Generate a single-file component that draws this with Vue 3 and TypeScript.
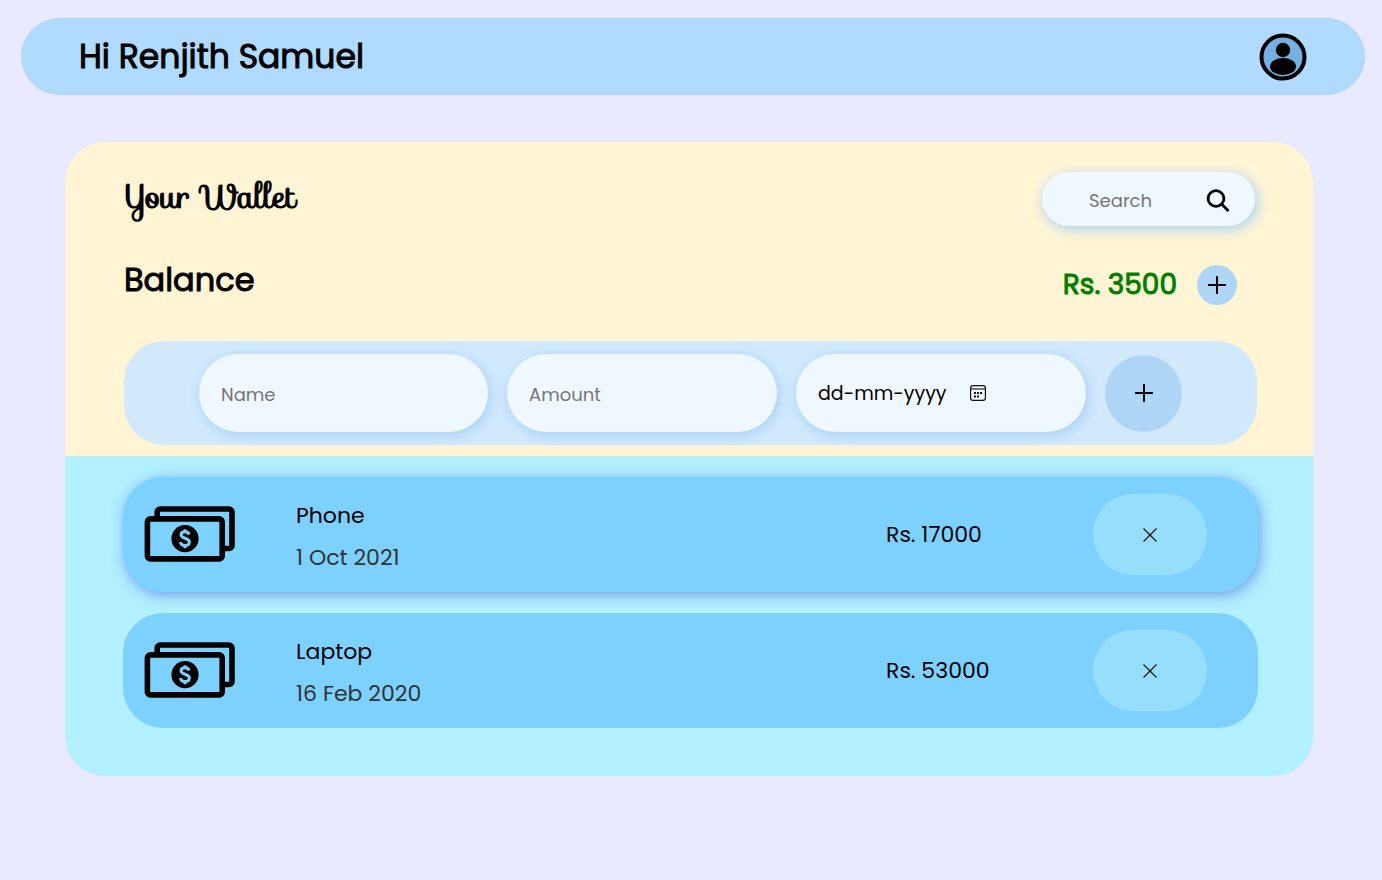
<script setup lang="ts">
import { computed, ref } from 'vue'

interface Expense {
  id: number
  name: string
  date: string
  amount: number
  raised: boolean
}

const user = 'Renjith Samuel'
const balance = ref(3500)
const query = ref('')
const name = ref('')
const amount = ref('')
const date = ref('')

const expenses = ref<Expense[]>([
  { id: 1, name: 'Phone', date: '1 Oct 2021', amount: 17000, raised: true },
  { id: 2, name: 'Laptop', date: '16 Feb 2020', amount: 53000, raised: false },
])

const visible = computed(() =>
  expenses.value.filter((e) => e.name.toLowerCase().includes(query.value.toLowerCase())),
)

function addExpense() {
  const value = Number(amount.value)
  if (!name.value || !value) return
  expenses.value.push({ id: Date.now(), name: name.value, date: date.value, amount: value, raised: false })
  name.value = ''
  amount.value = ''
  date.value = ''
}

function removeExpense(id: number) {
  expenses.value = expenses.value.filter((e) => e.id !== id)
}
</script>

<template>
  <div class="page">
    <header class="topbar">
      <h1 class="heading greeting">Hi {{ user }}</h1>
      <button class="avatar" type="button" aria-label="Profile">
        <svg viewBox="0 0 48 48" width="48" height="48" aria-hidden="true">
          <circle cx="24" cy="24" r="21.5" fill="#74b1e2" stroke="#000" stroke-width="4" />
          <circle cx="24" cy="17" r="7.2" />
          <ellipse cx="24" cy="33.5" rx="13" ry="8.5" />
        </svg>
      </button>
    </header>

    <main class="wallet">
      <section class="summary">
        <div class="row title-row">
          <h2 class="script">Your Wallet</h2>
          <form class="search" role="search" @submit.prevent>
            <input v-model="query" class="search-input" type="text" placeholder="Search" aria-label="Search" />
            <button class="plain" type="submit" aria-label="Run search">
              <svg viewBox="0 0 24 24" width="24" height="24" fill="none" stroke="#000" stroke-width="2.8" aria-hidden="true">
                <circle cx="10" cy="10.500" r="7.900" />
                <path d="M15.500 16 22.500 23" />
              </svg>
            </button>
          </form>
        </div>

        <div class="row balance-row">
          <h2 class="heading">Balance</h2>
          <div class="balance">
            <span class="balance-value">Rs. {{ balance }}</span>
            <button class="round small" type="button" aria-label="Add balance">
              <svg class="plus" viewBox="0 0 18 18" width="18" height="18" aria-hidden="true">
                <path d="M9 0v18M0 9h18" />
              </svg>
            </button>
          </div>
        </div>

        <form class="entry" @submit.prevent="addExpense">
          <input v-model="name" class="field" type="text" placeholder="Name" aria-label="Name" />
          <input v-model="amount" class="field" type="text" inputmode="numeric" placeholder="Amount" aria-label="Amount" />
          <div class="field date-field">
            <input v-model="date" class="date-input" type="text" placeholder="dd-mm-yyyy" aria-label="Date" />
            <button class="plain" type="button" aria-label="Choose date">
              <svg viewBox="0 0 16 16" width="16" height="16" aria-hidden="true">
                <rect x="0.6" y="0.6" width="14.8" height="14.8" rx="2.4" fill="none" stroke="#111" stroke-width="1.2" />
                <path d="M1 4h14" stroke="#111" stroke-width="1.1" />
                <path d="M4 7h2v2H4zM7 7h2v2H7zM10 7h2v2h-2zM4 10.5h2v2H4zM7 10.5h2v2H7z" fill="#111" />
              </svg>
            </button>
          </div>
          <button class="round large" type="submit" aria-label="Add expense">
            <svg class="plus" viewBox="0 0 18 18" width="18" height="18" aria-hidden="true">
              <path d="M9 0v18M0 9h18" />
            </svg>
          </button>
        </form>
      </section>

      <ul class="list">
        <li v-for="item in visible" :key="item.id" class="item" :class="{ raised: item.raised }">
          <svg viewBox="0 0 92 58" width="92" height="58" aria-hidden="true">
            <g fill="none" stroke="#000" stroke-width="5.6">
              <rect x="3.4" y="12.9" width="74.8" height="40" rx="3" />
              <path d="M13.2 12V6a3 3 0 0 1 3-3H85a3 3 0 0 1 3 3V39.5a3 3 0 0 1-3 3H79" />
            </g>
            <circle cx="41" cy="32.7" r="13.6" />
            <path
              d="M45 28.6c-.4-2-2-2.9-4-2.9-2.3 0-4 1.2-4 3.1 0 4.300 8.300 2.600 8.300 7.200 0 2.200-1.900 3.500-4.300 3.500-2.500 0-4.300-1.200-4.600-3.400M41 23.200v2.800M41 39.300v2.900"
              fill="none"
              stroke="#7dd1ff"
              stroke-width="3"
            />
          </svg>
          <div class="details">
            <span>{{ item.name }}</span>
            <span class="date">{{ item.date }}</span>
          </div>
          <span>Rs. {{ item.amount }}</span>
          <button class="remove" type="button" :aria-label="`Remove ${item.name}`" @click="removeExpense(item.id)">
            <svg viewBox="0 0 14 14" width="14" height="14" aria-hidden="true">
              <path d="M.5 .5l13 13M13.5 .5l-13 13" stroke="#111" stroke-width="1.2" />
            </svg>
          </button>
        </li>
      </ul>
    </main>
  </div>
</template>

<style>
body {
  margin: 0;
  background: #e9eaff;
}
</style>

<style scoped>
.page {
  padding: 18px 17px 48px 21px;
  font-family: Poppins, Inter, "Open Sans", sans-serif;
  font-size: 22px;
  color: #000;
}

.page *,
.page *::before {
  box-sizing: border-box;
}

button,
input {
  font-family: inherit;
  color: inherit;
  border: 0;
  padding: 0;
}

button {
  cursor: pointer;
}

input:focus {
  outline: none;
}

svg {
  display: block;
}

.plain,
.avatar {
  background: none;
}

.topbar {
  display: flex;
  align-items: center;
  justify-content: space-between;
  height: 77px;
  padding: 0 57px;
  background: #b0dbff;
  border: 1px solid #acd6f8;
  border-radius: 40px;
}

.heading {
  margin: 0;
  font-size: 32px;
  line-height: 40px;
  font-weight: 400;
  -webkit-text-stroke: 1px currentColor;
}

.greeting {
  font-size: 33px;
}

.wallet {
  margin: 47px 52px 0 44px;
  border-radius: 40px;
  overflow: hidden;
  background: #b2efff;
}

.summary {
  padding: 30px 56px 11px 59px;
  background: #fff5d5;
}

.row {
  display: flex;
  justify-content: space-between;
}

.script {
  margin: 0;
  padding-top: 4px;
  font-family: Sofia, "Liberation Serif", serif;
  font-weight: 700;
  font-size: 32px;
  line-height: 42px;
}

.search {
  display: flex;
  align-items: center;
  justify-content: space-between;
  width: 213px;
  height: 54px;
  margin-right: 2px;
  padding: 2px 25px 0 47px;
  border-radius: 27px;
  background: #f0f8ff;
  box-shadow: 2px 3px 14px #a3cff5;
}

.search-input {
  width: 100px;
  height: 40px;
  background: none;
  font-size: 18px;
}

input::placeholder {
  color: #757575;
  opacity: 1;
}

.balance-row {
  margin-top: 34px;
}

.balance {
  display: flex;
  align-items: center;
  gap: 20px;
  margin: 5px 20px 0 0;
}

.balance-value {
  color: #008000;
  font-size: 28px;
  line-height: 40px;
  font-weight: 400;
  -webkit-text-stroke: 1px currentColor;
}

.round {
  display: grid;
  place-items: center;
  border-radius: 50%;
  background: #aed5f6;
}

.small {
  width: 40px;
  height: 40px;
}

.large {
  width: 77px;
  height: 77px;
}

.plus {
  fill: none;
  stroke: #000;
  stroke-width: 2;
}

.entry {
  display: grid;
  grid-template-columns: 289fr 270fr 290fr 77px;
  align-items: center;
  gap: 19px;
  height: 104px;
  margin-top: 36px;
  padding: 0 75px;
  border-radius: 40px;
  background: #d2e9fc;
}

.field {
  width: 100%;
  min-width: 0;
  height: 78px;
  padding: 2px 22px 0;
  border-radius: 40px;
  background: #f0f8ff;
  box-shadow: 2px 3px 14px #a3cff5;
  font-size: 18px;
}

.date-field {
  display: flex;
  align-items: center;
  gap: 16px;
  padding-top: 0;
}

.date-input {
  width: 136px;
  height: 40px;
  background: none;
  font-size: 19px;
}

.date-input::placeholder {
  color: #000;
}

.list {
  display: flex;
  flex-direction: column;
  gap: 21px;
  margin: 0;
  padding: 21px 55px 48px 58px;
  list-style: none;
}

.item {
  display: grid;
  grid-template-columns: 92px 1fr 207px 114px;
  align-items: center;
  height: 115px;
  padding: 0 51px 0 21px;
  border-radius: 40px;
  background: #7dd1ff;
}

.raised {
  box-shadow: 2px 3px 14px #6c9fe4;
}

.details {
  display: flex;
  flex-direction: column;
  gap: 12px;
  padding: 5px 0 0 60px;
  line-height: 30px;
}

.date {
  color: #333;
}

.remove {
  display: grid;
  place-items: center;
  height: 81px;
  border-radius: 40px;
  background: #97defc;
}
</style>
